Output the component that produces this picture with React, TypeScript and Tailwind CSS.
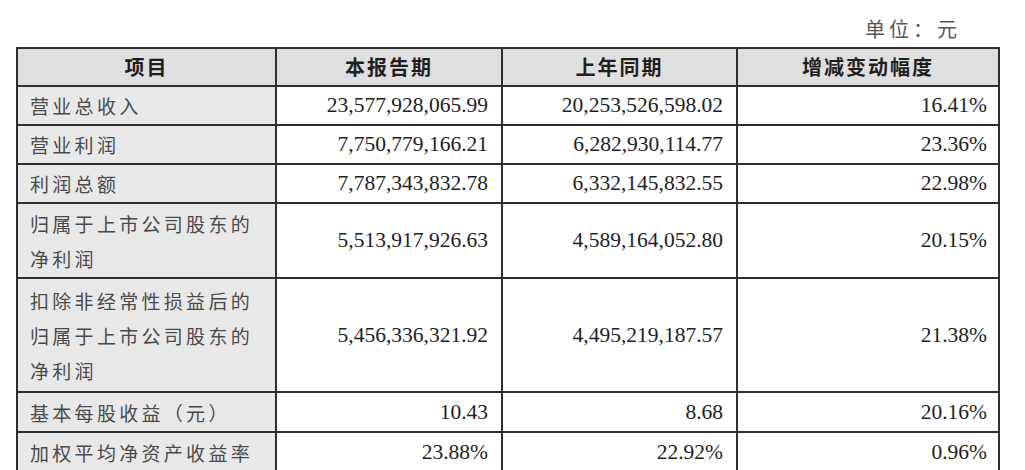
import { FC, Fragment } from "react";

type Row = {
  label: string[];
  current: string;
  last: string;
  change: string;
};

const rows: Row[] = [
  { label: ["营业总收入"], current: "23,577,928,065.99", last: "20,253,526,598.02", change: "16.41%" },
  { label: ["营业利润"], current: "7,750,779,166.21", last: "6,282,930,114.77", change: "23.36%" },
  { label: ["利润总额"], current: "7,787,343,832.78", last: "6,332,145,832.55", change: "22.98%" },
  { label: ["归属于上市公司股东的", "净利润"], current: "5,513,917,926.63", last: "4,589,164,052.80", change: "20.15%" },
  {
    label: ["扣除非经常性损益后的", "归属于上市公司股东的", "净利润"],
    current: "5,456,336,321.92",
    last: "4,495,219,187.57",
    change: "21.38%",
  },
  { label: ["基本每股收益（元）"], current: "10.43", last: "8.68", change: "20.16%" },
  { label: ["加权平均净资产收益率"], current: "23.88%", last: "22.92%", change: "0.96%" },
];

const headers = ["项目", "本报告期", "上年同期", "增减变动幅度"];

const cjk = "font-['Noto_Sans_CJK_SC',sans-serif]";
const num = "font-['Liberation_Serif','Times_New_Roman',serif] text-[21.5px] text-[#1e1e1e]";

const App: FC = () => {
  return (
    <div className="w-[1025px] h-[470px] overflow-hidden bg-white">
      <div className="pl-4 pt-[10px]">
        <div className={`${cjk} flex justify-end pr-[64px] h-[37px] items-center text-[20px] tracking-[4px] text-[#555]`}>
          单位：元
        </div>
        <div className="grid w-[984px] grid-cols-[257px_224px_233px_260px] grid-rows-[36px_37px_37px_37px_73px_112px_38px_38px] gap-[2px] bg-[#2e2e2e] p-[2px]">
          {headers.map((h) => (
            <div
              key={h}
              className={`${cjk} flex items-center justify-center bg-[#e0e0e0] text-[20px] font-bold tracking-[2px] text-[#1e1e1e]`}
            >
              {h}
            </div>
          ))}
          {rows.map((row) => (
            <Fragment key={row.label.join("")}>
              <div className={`${cjk} flex flex-col justify-center bg-[#e9e9e9] pl-[12px] text-[19px] leading-[35px] tracking-[3.3px] text-[#4a4a4a]`}>
                {row.label.map((line) => (
                  <span key={line}>{line}</span>
                ))}
              </div>
              <div className={`${num} flex items-center justify-end bg-white pr-[13px]`}>{row.current}</div>
              <div className={`${num} flex items-center justify-end bg-white pr-[13px]`}>{row.last}</div>
              <div className={`${num} flex items-center justify-end bg-white pr-[11px]`}>{row.change}</div>
            </Fragment>
          ))}
        </div>
      </div>
    </div>
  );
};

export default App;
